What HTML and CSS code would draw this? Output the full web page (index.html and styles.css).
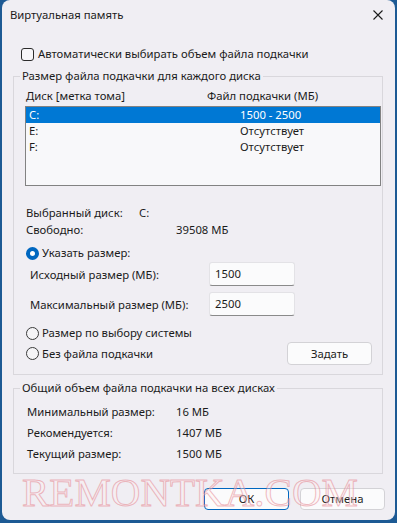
FILE: index.html
```html
<!DOCTYPE html>
<html lang="ru">
<head>
<meta charset="utf-8">
<title>Виртуальная память</title>
<link rel="stylesheet" href="styles.css">
</head>
<body>
<div class="window">
  <div class="titlebar">
    <span class="title">Виртуальная память</span>
    <svg class="close" width="10" height="10" viewBox="0 0 10 10"><path d="M0.5 0.5 L9.5 9.5 M9.5 0.5 L0.5 9.5" stroke="#1b1b1b" stroke-width="1.1" fill="none"/></svg>
  </div>
  <div class="content">
    <div class="check-row">
      <span class="checkbox"></span>
      <span>Автоматически выбирать объем файла подкачки</span>
    </div>
    <fieldset class="group group1">
      <legend>Размер файла подкачки для каждого диска</legend>
      <div class="list-head">
        <span class="col1">Диск [метка тома]</span>
        <span>Файл подкачки (МБ)</span>
      </div>
      <div class="listbox">
        <div class="lrow selected"><span class="lc1">C:</span><span>1500 - 2500</span></div>
        <div class="lrow"><span class="lc1">E:</span><span>Отсутствует</span></div>
        <div class="lrow"><span class="lc1">F:</span><span>Отсутствует</span></div>
      </div>
      <div class="info first"><span class="il1">Выбранный диск:</span><span>C:</span></div>
      <div class="info"><span class="il2">Свободно:</span><span>39508 МБ</span></div>
      <div class="radio-row r1"><span class="radio on"></span><span>Указать размер:</span></div>
      <div class="field-row fr1"><span class="flabel">Исходный размер (МБ):</span><span class="textbox">1500</span></div>
      <div class="field-row fr2"><span class="flabel">Максимальный размер (МБ):</span><span class="textbox">2500</span></div>
      <div class="radio-row r2"><span class="radio"></span><span>Размер по выбору системы</span></div>
      <div class="radio-row r3"><span class="radio"></span><span class="rtext">Без файла подкачки</span><span class="btn set">Задать</span></div>
    </fieldset>
    <fieldset class="group group2">
      <legend>Общий объем файла подкачки на всех дисках</legend>
      <div class="trow first"><span class="tl">Минимальный размер:</span><span>16 МБ</span></div>
      <div class="trow"><span class="tl">Рекомендуется:</span><span>1407 МБ</span></div>
      <div class="trow"><span class="tl">Текущий размер:</span><span>1500 МБ</span></div>
    </fieldset>
    <div class="buttons">
      <span class="btn ok">ОК</span>
      <span class="btn">Отмена</span>
    </div>
  </div>
  <div class="watermark">REMONTKA.COM</div>
</div>
</body>
</html>
```

FILE: styles.css
```css
html, body {
  margin: 0;
  padding: 0;
}
body {
  width: 397px;
  height: 523px;
  overflow: hidden;
  background: #1d5a94;
  font-family: "Noto Sans", "Open Sans", sans-serif;
  font-size: 11.3px;
  color: #1b1b1b;
}
.window {
  position: relative;
  width: 393px;
  height: 520px;
  margin-left: 2px;
  background: #f0eef3;
  border-radius: 8px;
  overflow: hidden;
}
.titlebar {
  height: 30px;
  display: flex;
  align-items: center;
  justify-content: space-between;
  padding: 0 12px 0 8px;
}
.title {
  line-height: 16px;
}
.content {
  padding-left: 11px;
}
.check-row {
  margin-top: 16px;
  height: 16px;
  display: flex;
  align-items: center;
  padding-left: 8px;
  gap: 4px;
  line-height: 16px;
}
.checkbox {
  width: 11px;
  height: 11px;
  border: 1px solid #2b2b2b;
  border-radius: 3px;
  background: #f7f6f9;
}
.group {
  margin: 0;
  padding: 0 1px 0 11px;
  width: 370px;
  box-sizing: border-box;
  border: 1px solid #d9d7dc;
  border-radius: 0;
  min-inline-size: 0;
}
.group legend {
  padding: 0 2px;
  margin-left: -5px;
  line-height: 16px;
}
.group1 {
  margin-top: 6px;
  padding-bottom: 9px;
}
.list-head {
  margin-top: 4px;
  display: flex;
  line-height: 16px;
  padding-left: 1px;
}
.col1 {
  width: 181px;
}
.listbox {
  margin-top: 2px;
  height: 80px;
  width: 356px;
  box-sizing: border-box;
  border: 1px solid #828282;
  background: #f8f8fa;
}
.lrow {
  display: flex;
  height: 16px;
  line-height: 16px;
  padding-left: 3px;
}
.lrow.selected {
  background: #0078d4;
  color: #ffffff;
}
.lc1 {
  width: 211px;
}
.info {
  display: flex;
  line-height: 17px;
  padding-left: 1px;
}
.info.first {
  margin-top: 18px;
}
.il1 {
  width: 113px;
}
.il2 {
  width: 150px;
}
.radio-row {
  display: flex;
  align-items: center;
  height: 16px;
  line-height: 16px;
  padding-left: 1px;
  gap: 3px;
}
.radio {
  width: 11px;
  height: 11px;
  border: 1px solid #3a3a3a;
  border-radius: 50%;
  background: #f5f4f7;
  box-sizing: content-box;
}
.radio.on {
  width: 5px;
  height: 5px;
  border: 4px solid #0067c0;
  background: #ffffff;
}
.r1 {
  margin-top: 7px;
}
.field-row {
  display: flex;
  align-items: center;
  height: 24px;
  padding-left: 5px;
}
.fr1 {
  margin-top: 1px;
}
.fr2 {
  margin-top: 6px;
}
.flabel {
  width: 179px;
}
.textbox {
  width: 86px;
  height: 24px;
  box-sizing: border-box;
  padding-left: 5px;
  line-height: 22px;
  background: #fbfbfc;
  border: 1px solid #e3e2e6;
  border-bottom-color: #8a8a8a;
  border-radius: 3px;
}
.r2 {
  margin-top: 9px;
}
.r3 {
  margin-top: 1px;
  height: 23px;
}
.rtext {
  flex: 1;
}
.btn {
  display: flex;
  align-items: center;
  justify-content: center;
  width: 85px;
  height: 22px;
  box-sizing: border-box;
  background: #fbfbfc;
  border: 1px solid #d3d2d6;
  border-radius: 4px;
  line-height: 16px;
}
.set {
  height: 23px;
  margin-right: 9px;
}
.group2 {
  margin-top: 5px;
  padding-bottom: 9px;
}
.trow {
  display: flex;
  align-items: center;
  height: 21px;
  padding-left: 2px;
}
.trow.first {
  margin-top: 5px;
}
.tl {
  width: 149px;
}
.buttons {
  margin-top: 14px;
  display: flex;
  justify-content: flex-end;
  gap: 11px;
  padding-right: 10px;
}
.btn.ok {
  border-color: #0067c0;
}
.watermark {
  position: absolute;
  left: 20px;
  top: 469px;
  font-family: "Liberation Serif", serif;
  font-size: 41px;
  line-height: 46px;
  color: rgba(255, 240, 242, 0.35);
  -webkit-text-stroke: 1px rgba(226, 120, 132, 0.5);
  pointer-events: none;
  white-space: nowrap;
}
```
